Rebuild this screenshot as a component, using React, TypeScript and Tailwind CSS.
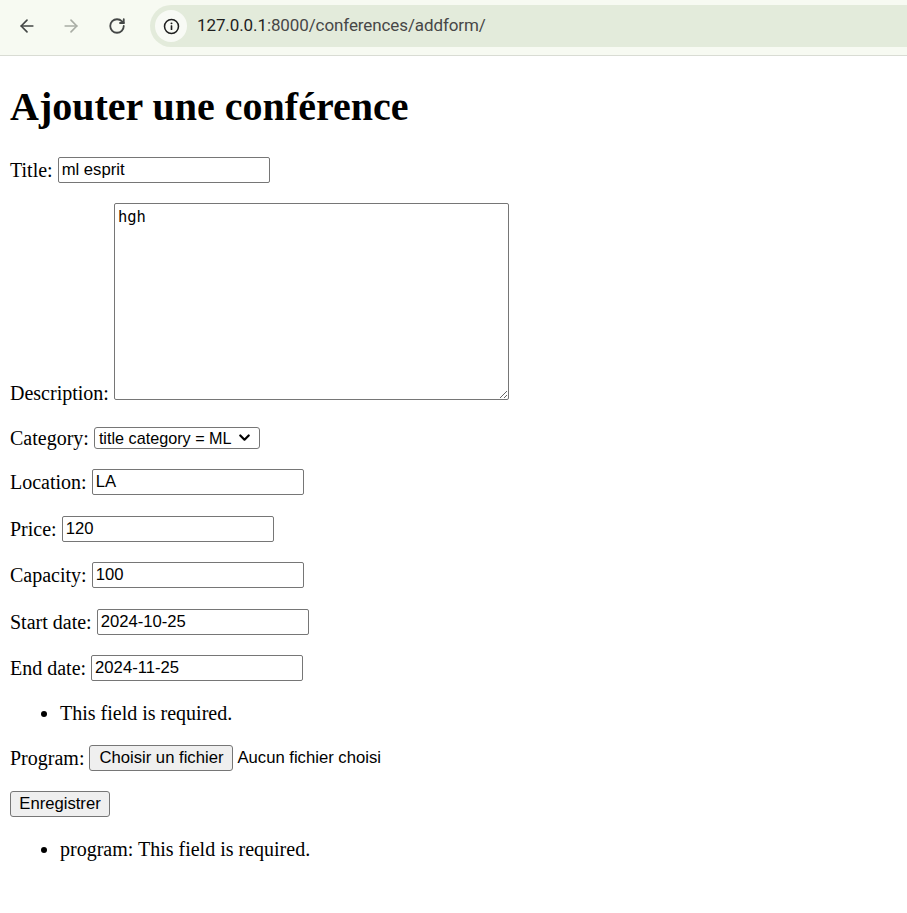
import React from "react";
import { ArrowLeft, ArrowRight, RotateCw } from "lucide-react";

const inputCls =
  "h-[26px] w-[212px] shrink-0 border border-[#767676] rounded-[2px] bg-white px-[3px] font-['Liberation_Sans',Arial,sans-serif] text-[16.67px] text-black outline-none";

const btnCls =
  "h-[26px] shrink-0 border border-[#767676] rounded-[3px] bg-[#efefef] font-['Liberation_Sans',Arial,sans-serif] text-[16.67px] text-black";

function Field({
  label,
  value,
  mt,
}: {
  label: string;
  value: string;
  mt: string;
}) {
  return (
    <div className={`flex h-[26px] items-center gap-[5px] ${mt}`}>
      <span>{label}</span>
      <input className={inputCls} defaultValue={value} type="text" />
    </div>
  );
}

function BrowserBar() {
  return (
    <header className="flex h-[56px] overflow-hidden border-b border-[#d9dcd4] bg-[#f7faf2] pl-[9px]">
      <div className="flex h-[52px] w-[36px] items-center justify-center text-[#444746]">
        <ArrowLeft size={20} strokeWidth={2} />
      </div>
      <div className="ml-[8px] flex h-[52px] w-[36px] items-center justify-center text-[#a9ada5]">
        <ArrowRight size={20} strokeWidth={2} />
      </div>
      <div className="ml-[10px] flex h-[52px] w-[36px] items-center justify-center text-[#444746]">
        <RotateCw size={18} strokeWidth={2.4} />
      </div>
      <div className="-mr-[40px] ml-[15px] mt-[5px] flex h-[42px] flex-1 items-center rounded-full bg-[#e3ebdb]">
        <div className="ml-[5px] flex h-[32px] w-[32px] items-center justify-center rounded-full bg-[#f8faf5]">
          <svg width="17" height="17" viewBox="0 0 20 20" fill="none">
            <circle cx="10" cy="10" r="8.2" stroke="#1f1f1f" strokeWidth="1.8" />
            <rect x="9.05" y="8.6" width="1.9" height="5.6" rx="0.5" fill="#1f1f1f" />
            <circle cx="10" cy="6.3" r="1.15" fill="#1f1f1f" />
          </svg>
        </div>
        <div className="ml-[10px] font-['Roboto','Noto_Sans',sans-serif] text-[17px] tracking-[-0.1px]">
          <span className="text-[#1f1f1f]">127.0.0.1</span>
          <span className="text-[#474747]">:8000/conferences/addform/</span>
        </div>
      </div>
    </header>
  );
}

export default function App() {
  return (
    <div className="min-h-screen bg-white">
      <BrowserBar />
      <main className="px-[10px] pb-[40px] font-['Liberation_Serif','Times_New_Roman',serif] text-[20px] leading-[22px] text-black">
        <h1 className="mt-[29px] text-[40px] font-bold leading-[44px]">
          Ajouter une conférence
        </h1>

        <form>
          <Field label="Title:" value="ml esprit" mt="mt-[28px]" />

          <div className="mt-[20px] flex items-end gap-[5px]">
            <span className="-mb-[4px]">Description:</span>
            <textarea
              className="h-[197px] w-[395px] shrink-0 resize rounded-[2px] border border-[#767676] bg-white px-[3px] py-[4px] font-['DejaVu_Sans_Mono',monospace] text-[15.5px] leading-[18px] text-black outline-none"
              defaultValue="hgh"
            />
          </div>

          <div className="mt-[27px] flex h-[22px] items-center gap-[5px]">
            <span>Category:</span>
            <div className="flex h-[22px] w-[166px] shrink-0 items-center justify-between rounded-[3px] border border-[#767676] bg-white pl-[4px] pr-[9px] font-['Liberation_Sans',Arial,sans-serif] text-[16.2px]">
              <span>title category = ML</span>
              <svg width="11" height="8" viewBox="0 0 11 8" fill="none">
                <path
                  d="M1.3 1.5 L5.5 5.7 L9.7 1.5"
                  stroke="#000"
                  strokeWidth="2.2"
                  strokeLinecap="round"
                  strokeLinejoin="round"
                />
              </svg>
            </div>
          </div>

          <Field label="Location:" value="LA" mt="mt-[20px]" />
          <Field label="Price:" value="120" mt="mt-[21px]" />
          <Field label="Capacity:" value="100" mt="mt-[20px]" />
          <Field label="Start date:" value="2024-10-25" mt="mt-[21px]" />
          <Field label="End date:" value="2024-11-25" mt="mt-[20px]" />

          <ul className="mt-[21px] list-disc pl-[50px]">
            <li>This field is required.</li>
          </ul>

          <div className="mt-[21px] flex h-[26px] items-center">
            <span className="mr-[5px]">Program:</span>
            <button type="button" className={`${btnCls} w-[144px]`}>
              Choisir un fichier
            </button>
            <span className="ml-[4px] font-['Liberation_Sans',Arial,sans-serif] text-[16.67px]">
              Aucun fichier choisi
            </span>
          </div>

          <div className="mt-[20px] flex">
            <button type="button" className={`${btnCls} w-[100px]`}>
              Enregistrer
            </button>
          </div>

          <ul className="mt-[21px] list-disc pl-[50px]">
            <li>program: This field is required.</li>
          </ul>
        </form>
      </main>
    </div>
  );
}
